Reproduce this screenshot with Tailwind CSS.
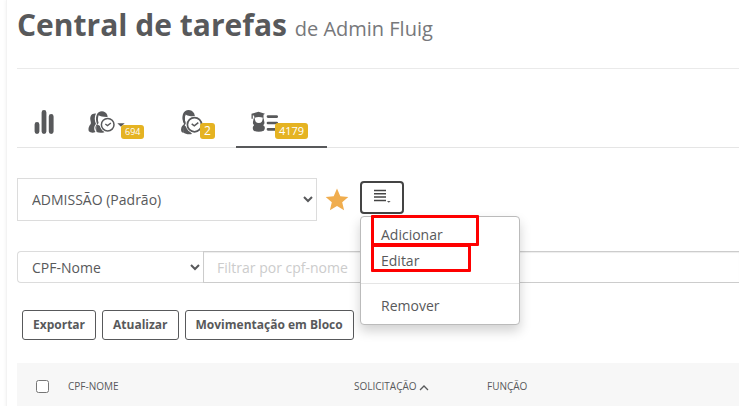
<!DOCTYPE html>
<html lang="pt-BR">
<head>
  <meta charset="UTF-8" />
  <meta name="viewport" content="width=device-width, initial-scale=1.0"/>
  <title>Central de tarefas</title>
  <script src="https://cdn.jsdelivr.net/npm/@tailwindcss/browser@4"></script>
</head>
<body class="h-screen overflow-hidden bg-white pl-1.5 font-['Open_Sans',sans-serif] text-sm text-[#58595b]">
  <main class="min-h-screen border-l border-[#f3f3f3] pl-2.5 shadow-[-1px_0_3px_rgba(0,0,0,0.04)]">

    <!-- Title -->
    <header class="border-b border-[#eaeaea] pt-[5px] pb-[19px]">
      <h1 class="text-[30px] leading-10 font-bold whitespace-nowrap">
        Central de tarefas
        <small class="text-[20px] font-normal text-[#77787b]">de Admin Fluig</small>
      </h1>
    </header>

    <!-- Tabs -->
    <nav class="mt-7 flex h-[51px] border-b border-[#e5e5e5]">
      <a href="#" aria-label="Gráficos" class="flex w-[54px] justify-center pt-3">
        <svg class="h-7 w-5" viewBox="0 0 20 28" fill="none" stroke="#58595b" stroke-width="4.8" stroke-linecap="round">
          <path d="M3 15.400v7.200M10 3.400v19.200M17.200 7.400v15.200"/>
        </svg>
      </a>
      <a href="#" aria-label="Tarefas" class="flex w-[93px] pt-3 pl-4">
        <svg class="h-7 w-10 shrink-0" viewBox="0 0 40 28">
          <g fill="#58595b" transform="translate(0 -1.500)">
            <path d="M9 6C4.500 5.500 3 8.500 3.300 12c.2 2 1 3 .4 4.500C2 18 1 21 1.700 23.500 3.500 25.500 6 25.600 8.500 24.600 6.500 22 7 18.500 9 16.500 7.500 13.500 7.200 9 9 6z"/>
            <path d="M9.600 7.800C11 3 18 2.200 20.300 7.500l.3 2C16.500 9.600 13.500 9 11.600 7.800 11 10 10.500 12.500 11.600 15.500c-1.800 1.500-2.600 4.500-2 8-1.700-2-1.600-5 .4-7C8.900 13.500 8.600 10.500 9.600 7.800z"/>
            <path d="M10.500 17l2.500 1.500 1.500 3 3 3.300C14.500 25.600 11.500 25.500 9.600 24.500 8.900 22 9.200 19 10.500 17z"/>
          </g>
          <circle cx="20.700" cy="15.700" r="7.700" fill="#fff"/>
          <circle cx="20.700" cy="15.700" r="6.300" fill="#fff" stroke="#58595b" stroke-width="1.500"/>
          <path d="M18.300 15l2.200 1.600 3.400-2.500" fill="none" stroke="#58595b" stroke-width="1.300"/>
          <path d="M30.300 14.200h7.400l-3.700 3.500z" fill="#58595b"/>
        </svg>
        <span class="z-10 mt-4 -ml-1.5 h-3.5 rounded-[3px] bg-[#e5b322] px-1 text-[9px] leading-3.5 text-white">694</span>
      </a>
      <a href="#" aria-label="Tarefas em atraso" class="flex w-[72px] pt-3 pl-4">
        <svg class="h-7 w-[26px] shrink-0" viewBox="0 0 26 28">
          <g fill="#58595b">
            <path d="M3 5C5 0 11.500-.2 14.200 4.500l.8 3C11 7.500 8 7 5.500 5.500c-1 3-.8 6 .3 9C4.500 17 3 20 4 23.500 1.500 24 .9 22 1.100 20c.2-2.500 1.700-3.700 3-5C2.500 12 2 8 3 5z"/>
            <path d="M4.500 16.500l3.500 2.500 4 6C8.500 25.700 5 25 3.500 23.500 3 20.500 3.300 18 4.500 16.500z"/>
            <path d="M3.500 5.500C2.300 8 2.500 11.500 4 14l1.500-.5C4.500 11 4.700 8 5.500 5.500z"/>
          </g>
          <circle cx="14.500" cy="15.700" r="8.700" fill="#fff"/>
          <circle cx="14.500" cy="15.700" r="7.100" fill="#fff" stroke="#58595b" stroke-width="1.700"/>
          <path d="M11.700 14.900l2.600 2 4-3.200" fill="none" stroke="#58595b" stroke-width="1.500"/>
        </svg>
        <span class="z-10 mt-3.5 -ml-1.5 h-4 rounded-[3px] bg-[#e5b322] px-1 text-[12px] leading-4 text-white">2</span>
      </a>
      <a href="#" aria-label="Tarefas em grupo" aria-current="page" class="flex h-[51px] w-[91px] border-b-2 border-[#58595b] pt-3 pl-3.5">
        <svg class="h-7 w-7 shrink-0" viewBox="0 0 28 28">
          <g fill="#58595b">
            <path d="M8.500 2.700L15 4.700 13.500 5.700v3.300C10.500 7.700 7 7.700 4.200 9V6.700L2.800 6.200v3.500H1.500v-5z"/>
            <path d="M3.200 15C2.500 13.500 3.400 12 3.600 9.500l1.200-.6c0 3 1.200 5 4 5s3.900-2 3.900-5l1.100.6c.1 2.500 1.100 4 .4 5.500-1 1-1.200 1.300 0 2 1 1.500.8 3.300-.4 4.700-3 1.500-7.300 1.500-10 0-1.200-1.400-1.400-3.500-.4-4.700 1-.7.700-1-.2-2z"/>
          </g>
          <path d="M18 7.600h8.700M18 14h8.700M18 20.300h8.700" stroke="#58595b" stroke-width="2.700" stroke-linecap="round"/>
        </svg>
        <span class="z-10 mt-3.5 -ml-[3px] h-4 rounded-[3px] bg-[#e5b322] px-1 text-[11px] leading-4 text-white">4179</span>
      </a>
    </nav>

    <!-- Process and favourites -->
    <div class="mt-[30px] flex items-center">
      <select aria-label="Processo" class="h-[43px] w-[300px] border border-[#dcdcdc] bg-white pl-2.5 text-sm">
        <option>ADMISSÃO (Padrão)</option>
      </select>
      <button type="button" aria-label="Favorito" class="ml-2">
        <svg class="h-6 w-6" viewBox="0 0 24 24" fill="#f0ad4e">
          <path d="M12 .5l3.300 7.700 8 .7-6.100 5.300 1.900 8L12 18l-7.100 4.200 1.900-8L.7 8.900l8-.7z"/>
        </svg>
      </button>
      <div class="relative ml-[11px] pb-1">
        <button type="button" aria-label="Filtros" aria-expanded="true" class="flex h-[33px] w-11 rounded border-2 border-[#444] pt-1.5 pl-3">
          <svg class="h-4 w-[18px]" viewBox="0 0 18 16">
            <path d="M0 1.500h12M0 4.800h12M0 8.100h12M0 11.400h12" stroke="#444" stroke-width="1.500"/>
            <path d="M13 12h3.600l-1.800 1.800z" fill="#58595b"/>
          </svg>
        </button>
        <ul class="absolute top-[35px] left-0 z-20 w-40 rounded border border-[#bbb] bg-white py-[5px] shadow-[0_6px_12px_rgba(0,0,0,0.18)]">
          <li><a href="#" class="block px-5 leading-[26px]">Adicionar</a></li>
          <li><a href="#" class="block px-5 leading-[26px]">Editar</a></li>
          <li class="my-[9px] h-px bg-[#e5e5e5]"></li>
          <li><a href="#" class="block px-5 leading-[26px]">Remover</a></li>
        </ul>
        <!-- Highlights -->
        <div class="pointer-events-none absolute top-[34px] left-[11px] z-30 h-[31px] w-[108px] rounded-[1px] border-3 border-[#fe0000]"></div>
        <div class="pointer-events-none absolute top-[63px] left-[11px] z-30 h-7 w-[100px] rounded-[1px] border-3 border-[#fe0000]"></div>
      </div>
    </div>

    <!-- Search -->
    <div class="mt-[30px] flex">
      <select aria-label="Campo" class="h-8 w-[186px] rounded-l border border-r-0 border-[#dcdcdc] bg-white pl-2.5 text-sm">
        <option>CPF-Nome</option>
      </select>
      <input type="text" aria-label="Filtrar" placeholder="Filtrar por cpf-nome" class="h-8 min-w-0 flex-1 border border-r-0 border-[#ccc] px-[13px] text-sm shadow-[inset_0_1px_1px_rgba(0,0,0,0.075)] placeholder:text-[#ccc]" />
    </div>

    <!-- Actions -->
    <div class="mt-[27px] flex gap-1.5 pl-[5px] text-xs font-bold">
      <button type="button" class="h-[30px] rounded-[3px] border border-[#58595b] px-2.5">Exportar</button>
      <button type="button" class="h-[30px] rounded-[3px] border border-[#58595b] px-2.5">Atualizar</button>
      <button type="button" class="h-[30px] rounded-[3px] border border-[#58595b] px-2.5">Movimentação em Bloco</button>
    </div>

    <!-- Tasks -->
    <table class="mt-[23px] w-full table-fixed bg-[#f7f7f7] text-left text-[10px]">
      <thead>
        <tr class="h-[46px]">
          <th class="w-[51px] pl-[19px]"><input type="checkbox" aria-label="Selecionar todos" class="block size-[13px]" /></th>
          <th class="w-[286px] font-normal">CPF-NOME</th>
          <th class="w-[133px] font-normal">
            <span class="flex items-center gap-0.5">SOLICITAÇÃO
              <svg class="mt-1 h-2 w-2.5" viewBox="0 0 10 8" fill="none" stroke="#58595b" stroke-width="1.300"><path d="M1 6l4-4 4 4"/></svg>
            </span>
          </th>
          <th class="font-normal">FUNÇÃO</th>
        </tr>
      </thead>
    </table>
  </main>
</body>
</html>
